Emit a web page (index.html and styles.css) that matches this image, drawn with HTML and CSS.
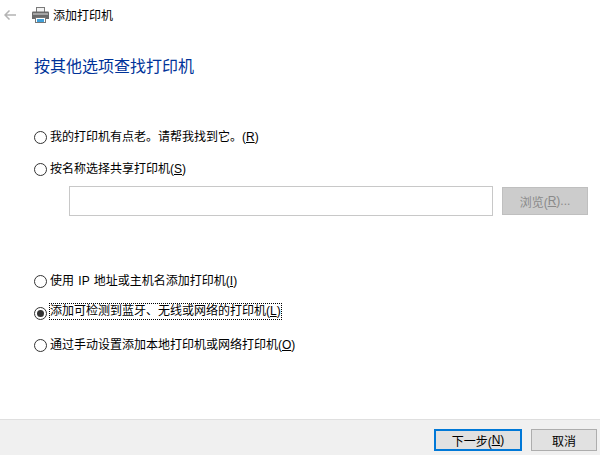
FILE: index.html
```html
<!DOCTYPE html>
<html lang="zh-CN">
<head>
    <meta charset="UTF-8">
    <title>添加打印机</title>
    <link rel="stylesheet" href="styles.css">
</head>
<body>
    <div class="titlebar">
        <svg class="back" width="12" height="10" viewBox="0 0 12 10">
            <path d="M5.5 .5 L1 5 L5.5 9.5 M1 5 H12" fill="none" stroke="#b4b4b4" stroke-width="1.5"/>
        </svg>
        <svg class="printer" width="17" height="16" viewBox="0 0 17 16">
            <rect x="4.5" y=".5" width="8" height="5" fill="#f2f2f2" stroke="#7a7a7a"/>
            <path d="M1 4.5 H16 Q17 4.5 17 5.5 V12 H0 V5.5 Q0 4.5 1 4.5 Z" fill="#6a6a6a"/>
            <rect x="1" y="6" width="15" height="2" fill="#a4a4a4"/>
            <rect x="3.5" y="10.5" width="10" height="5" fill="#fff" stroke="#777"/>
            <rect x="5" y="12" width="7" height="3" fill="#3f9fd8"/>
        </svg>
        <span class="titlebar-text">添加打印机</span>
    </div>

    <div class="content">
        <h1>按其他选项查找打印机</h1>

        <div class="options">
            <div class="option">
                <span class="radio"></span>
                <span class="option-text">我的打印机有点老。请帮我找到它。(<u>R</u>)</span>
            </div>
            <div class="option option-share">
                <span class="radio"></span>
                <span class="option-text">按名称选择共享打印机(<u>S</u>)</span>
            </div>
            <div class="share-row">
                <div class="share-input"></div>
                <div class="btn btn-disabled">浏览(<u>R</u>)...</div>
            </div>
            <div class="option option-ip">
                <span class="radio"></span>
                <span class="option-text option-text-ip">使用 IP 地址或主机名添加打印机(<u>I</u>)</span>
            </div>
            <div class="option">
                <span class="radio radio-on"></span>
                <span class="option-text option-focus">添加可检测到蓝牙、无线或网络的打印机(<u>L</u>)</span>
            </div>
            <div class="option">
                <span class="radio"></span>
                <span class="option-text">通过手动设置添加本地打印机或网络打印机(<u>O</u>)</span>
            </div>
        </div>
    </div>

    <div class="footer">
        <div class="btn btn-default">下一步(<u>N</u>)</div>
        <div class="btn btn-cancel">取消</div>
    </div>
</body>
</html>
```

FILE: styles.css
```css
html, body {
    height: 100%;
}
body {
    margin: 0;
    display: flex;
    flex-direction: column;
    width: 600px;
    height: 455px;
    overflow: hidden;
    background-color: #fff;
    color: #000;
    font-family: "Liberation Sans", "Noto Sans CJK SC", sans-serif;
    font-size: 12px;
}
.titlebar {
    display: flex;
    align-items: center;
    height: 30px;
    padding-left: 4px;
}
.back {
    margin-right: 16px;
}
.printer {
    margin-right: 4px;
}
.titlebar-text {
    padding-bottom: 2px;
}
.content {
    flex: 1;
    padding-left: 34px;
}
h1 {
    margin: 27px 0 0;
    font-size: 16px;
    line-height: 20px;
    font-weight: normal;
    color: #003399;
}
.options {
    margin-top: 48px;
}
.option {
    display: flex;
    align-items: center;
    height: 20px;
    margin-bottom: 12px;
}
.radio {
    box-sizing: border-box;
    width: 13px;
    height: 13px;
    margin-right: 3px;
    margin-top: 4px;
    border: 1px solid #333;
    border-radius: 50%;
    background-color: #fff;
}
.radio-on {
    position: relative;
}
.radio-on::after {
    content: "";
    position: absolute;
    top: 2px;
    left: 2px;
    width: 7px;
    height: 7px;
    border-radius: 50%;
    background-color: #333;
}
.option-text-ip {
    word-spacing: 1px;
}
.option-focus {
    outline: 1px dotted #000;
    line-height: 15px;
}
.share-row {
    display: flex;
    align-items: center;
    margin: -3px 12px 0 35px;
    gap: 9px;
}
.share-input {
    flex: 1;
    height: 28px;
    border: 1px solid #c8c8c8;
}
.btn {
    box-sizing: border-box;
    display: flex;
    align-items: center;
    justify-content: center;
    height: 22px;
    background-color: #e1e1e1;
    border: 1px solid #adadad;
}
.btn-disabled {
    width: 86px;
    height: 28px;
    background-color: #cccccc;
    border-color: #bfbfbf;
    color: #8a8a8a;
}
.option-ip {
    margin-top: 53px;
}
.footer {
    display: flex;
    justify-content: flex-end;
    gap: 9px;
    height: 36px;
    padding: 9px 3px 0 0;
    box-sizing: border-box;
    background-color: #f0f0f0;
    border-top: 1px solid #dfdfdf;
}
.btn-default {
    width: 88px;
    border: 2px solid #0078d7;
}
.btn-cancel {
    width: 66px;
}
```
